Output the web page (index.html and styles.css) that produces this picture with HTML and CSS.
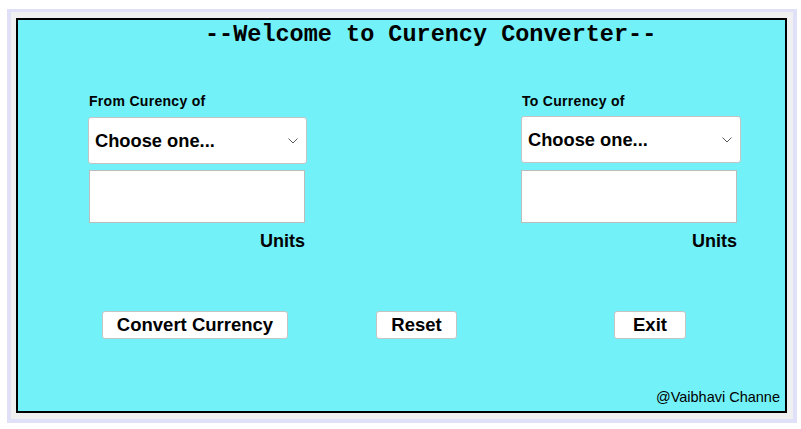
FILE: index.html
```html
<!DOCTYPE html>
<html>
<head>
<meta charset="utf-8">
<link rel="stylesheet" href="styles.css">
</head>
<body>
<div class="frame">
  <div class="panel">
    <h1 class="title">--Welcome to Curency Converter--</h1>
    <div class="fields">
      <div class="col">
        <div class="label">From Curency of</div>
        <div class="select select-left"><span>Choose one...</span>
          <svg class="chev" width="10" height="6" viewBox="0 0 10 6"><polyline points="0.5,0.5 5,5 9.5,0.5" fill="none" stroke="#5a5a5a" stroke-width="1"/></svg>
        </div>
        <div class="input input-left"></div>
        <div class="units units-left">Units</div>
      </div>
      <div class="col">
        <div class="label">To Currency of</div>
        <div class="select select-right"><span>Choose one...</span>
          <svg class="chev" width="10" height="6" viewBox="0 0 10 6"><polyline points="0.5,0.5 5,5 9.5,0.5" fill="none" stroke="#5a5a5a" stroke-width="1"/></svg>
        </div>
        <div class="input input-right"></div>
        <div class="units units-right">Units</div>
      </div>
    </div>
    <div class="buttons">
      <button class="btn btn-convert">Convert Currency</button>
      <button class="btn btn-reset">Reset</button>
      <button class="btn btn-exit">Exit</button>
    </div>
    <div class="footer">@Vaibhavi Channe</div>
  </div>
</div>
</body>
</html>
```
FILE: styles.css
```css
html, body {
  margin: 0;
  padding: 0;
  background: #ffffff;
}
body {
  padding: 9px 0 0 7px;
  font-family: "Liberation Sans", Arial, sans-serif;
}
.frame {
  box-sizing: border-box;
  width: 790px;
  height: 414px;
  border-style: solid;
  border-color: #e0e0f8;
  border-width: 3px 4px 4px 4px;
  background: #f0f0f0;
  padding: 6px 6px 6px 5px;
}
.panel {
  box-sizing: border-box;
  width: 771px;
  height: 395px;
  border: 2px solid #000000;
  background: #73f1f8;
  display: flex;
  flex-direction: column;
}
.title {
  margin: 0;
  padding-left: 187px;
  font-family: "Liberation Mono", "Courier New", monospace;
  font-weight: bold;
  font-size: 23.5px;
  line-height: 30px;
  color: #000;
}
.fields {
  display: flex;
  margin-top: 43px;
  padding-left: 70px;
  gap: 213px;
}
.col {
  width: 220px;
  display: flex;
  flex-direction: column;
}
.label {
  font-weight: bold;
  font-size: 14px;
  letter-spacing: 0.3px;
  line-height: 16px;
  height: 16px;
  color: #000;
  padding-left: 1px;
}
.select {
  box-sizing: border-box;
  height: 47px;
  background: #fff;
  border: 1px solid #c4c4c4;
  border-radius: 3px;
  display: flex;
  align-items: center;
  justify-content: space-between;
  padding: 0 8px 0 6px;
  font-weight: bold;
  font-size: 18.3px;
  color: #000;
}
.select-left {
  width: 219px;
  margin-top: 8px;
}
.select-right {
  width: 220px;
  margin-top: 7px;
}
.chev {
  display: block;
}
.input {
  box-sizing: border-box;
  width: 216px;
  height: 53px;
  background: #fff;
  border: 1px solid #bcbcbc;
}
.input-left {
  margin-top: 6px;
  margin-left: 1px;
}
.input-right {
  margin-top: 7px;
}
.units {
  width: 216px;
  margin-top: 8px;
  text-align: right;
  font-weight: bold;
  font-size: 18px;
  line-height: 20px;
  color: #000;
}
.units-left {
  margin-left: 1px;
}
.buttons {
  display: flex;
  margin-top: 60px;
  padding-left: 84px;
}
.btn {
  box-sizing: border-box;
  height: 28px;
  background: #fff;
  border: 1px solid #c4c4c4;
  border-radius: 3px;
  padding: 0;
  font-family: "Liberation Sans", Arial, sans-serif;
  font-weight: bold;
  font-size: 18.5px;
  color: #000;
  line-height: 26px;
}
.btn-convert {
  width: 186px;
}
.btn-reset {
  width: 81px;
  margin-left: 88px;
}
.btn-exit {
  width: 72px;
  margin-left: 157px;
}
.footer {
  margin-top: 49px;
  align-self: flex-end;
  padding-right: 5px;
  font-size: 14.5px;
  line-height: 18px;
  color: #000;
}
```
